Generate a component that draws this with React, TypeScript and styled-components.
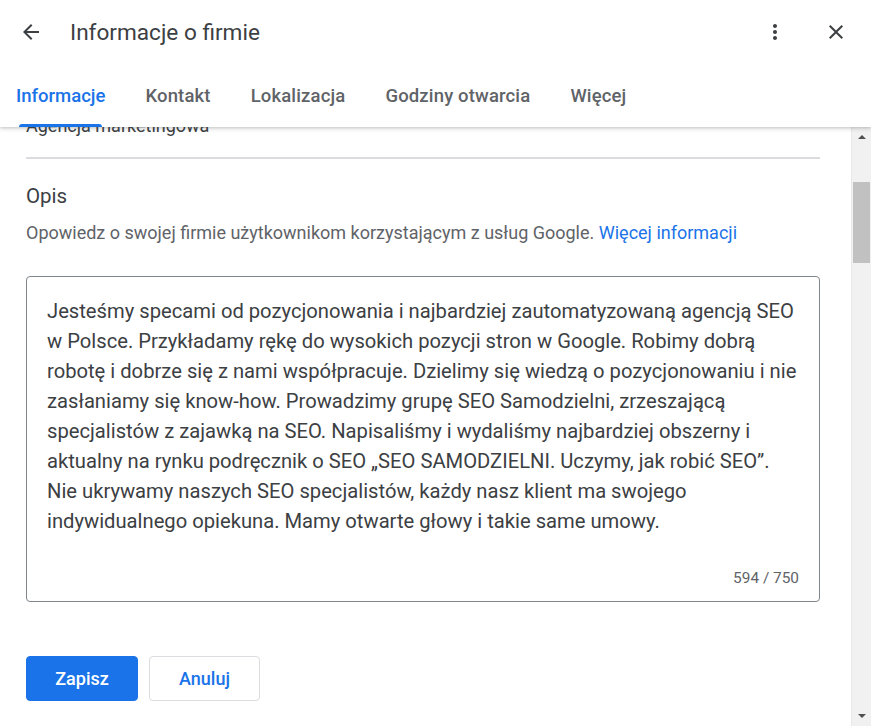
import React from 'react';
import styled, { createGlobalStyle } from 'styled-components';

const BLUE = '#1a73e8';
const TEXT = '#3c4043';
const MUTED = '#5f6368';

const tabs = ['Informacje', 'Kontakt', 'Lokalizacja', 'Godziny otwarcia', 'Więcej'];

const description =
  'Jesteśmy specami od pozycjonowania i najbardziej zautomatyzowaną agencją SEO w Polsce. Przykładamy rękę do wysokich pozycji stron w Google. Robimy dobrą robotę i dobrze się z nami współpracuje. Dzielimy się wiedzą o pozycjonowaniu i nie zasłaniamy się know-how. Prowadzimy grupę SEO Samodzielni, zrzeszającą specjalistów z zajawką na SEO. Napisaliśmy i wydaliśmy najbardziej obszerny i aktualny na rynku podręcznik o SEO „SEO SAMODZIELNI. Uczymy, jak robić SEO”. Nie ukrywamy naszych SEO specjalistów, każdy nasz klient ma swojego indywidualnego opiekuna. Mamy otwarte głowy i takie same umowy.';

export default function App() {
  return (
    <>
      <GlobalStyle />
      <Frame>
        <Header>
          <TopBar>
            <IconButton aria-label="Wstecz">
              <svg viewBox="0 0 24 24">
                <path d="M20 11H7.83l5.59-5.59L12 4l-8 8 8 8 1.41-1.41L7.83 13H20v-2z" />
              </svg>
            </IconButton>
            <Title>Informacje o firmie</Title>
            <Spacer />
            <IconButton aria-label="Więcej opcji">
              <svg viewBox="0 0 24 24">
                <path d="M12 8c1.1 0 2-.9 2-2s-.9-2-2-2-2 .9-2 2 .9 2 2 2zm0 2c-1.1 0-2 .9-2 2s.9 2 2 2 2-.9 2-2-.9-2-2-2zm0 6c-1.1 0-2 .9-2 2s.9 2 2 2 2-.9 2-2-.9-2-2-2z" />
              </svg>
            </IconButton>
            <IconButton aria-label="Zamknij">
              <svg viewBox="0 0 24 24">
                <path d="M19 6.41L17.59 5 12 10.59 6.41 5 5 6.41 10.59 12 5 17.59 6.41 19 12 13.41 17.59 19 19 17.59 13.41 12z" />
              </svg>
            </IconButton>
          </TopBar>
          <Tabs>
            {tabs.map((t, i) => (
              <Tab key={t} $active={i === 0}>
                {t}
              </Tab>
            ))}
          </Tabs>
        </Header>

        <Body>
          <Content>
            <FieldValue>Agencja marketingowa</FieldValue>
            <Divider />
            <SectionTitle>Opis</SectionTitle>
            <Hint>
              Opowiedz o swojej firmie użytkownikom korzystającym z usług Google.{' '}
              <Link href="#">Więcej informacji</Link>
            </Hint>
            <TextBox>
              <BoxText>{description}</BoxText>
              <Counter>594 / 750</Counter>
            </TextBox>
            <Actions>
              <Button $primary>Zapisz</Button>
              <Button>Anuluj</Button>
            </Actions>
          </Content>
          <ScrollBar>
            <Arrow $up />
            <ThumbTrack>
              <Thumb />
            </ThumbTrack>
            <Arrow />
          </ScrollBar>
        </Body>
      </Frame>
    </>
  );
}

const GlobalStyle = createGlobalStyle`
  html, body {
    margin: 0;
    padding: 0;
    background: #fff;
  }
  body {
    font-family: Roboto, "Noto Sans", Arial, sans-serif;
    color: ${TEXT};
  }
  * {
    box-sizing: border-box;
  }
`;

const Frame = styled.div`
  display: flex;
  flex-direction: column;
  width: 871px;
  height: 726px;
  overflow: hidden;
  background: #fff;
`;

const Header = styled.header`
  position: relative;
  z-index: 2;
  height: 127px;
  background: #fff;
  box-shadow: 0 2px 4px rgba(60, 64, 67, 0.18), 0 1px 2px rgba(60, 64, 67, 0.12);
`;

const TopBar = styled.div`
  display: flex;
  align-items: center;
  height: 64px;
  padding: 0 11px 0 7px;
  gap: 13px;
`;

const IconButton = styled.button`
  display: flex;
  align-items: center;
  justify-content: center;
  width: 48px;
  height: 48px;
  padding: 0;
  border: none;
  background: transparent;
  svg {
    width: 24px;
    height: 24px;
    fill: #3c4043;
  }
`;

const Title = styled.h1`
  margin: 0 0 0 2px;
  font-size: 22.6px;
  font-weight: 400;
  color: ${TEXT};
`;

const Spacer = styled.div`
  flex: 1;
`;

const Tabs = styled.nav`
  display: flex;
  height: 63px;
`;

const Tab = styled.div<{ $active?: boolean }>`
  position: relative;
  display: flex;
  align-items: center;
  height: 100%;
  padding: 0 20px 0 ${(p) => (p.$active ? '16px' : '20px')};
  font-size: 18.5px;
  font-weight: 500;
  letter-spacing: ${(p) => (p.$active ? '0' : '0.15px')};
  color: ${(p) => (p.$active ? BLUE : MUTED)};
  &::after {
    content: '';
    display: ${(p) => (p.$active ? 'block' : 'none')};
    position: absolute;
    left: 19px;
    right: 23px;
    bottom: 0;
    height: 3px;
    border-radius: 3px 3px 0 0;
    background: ${BLUE};
  }
`;

const Body = styled.div`
  display: flex;
  flex: 1;
  min-height: 0;
`;

const Content = styled.main`
  flex: 1;
  min-width: 0;
  overflow: hidden;
  padding: 0 31px 0 26px;
`;

const FieldValue = styled.div`
  margin-top: -11px;
  font-size: 18px;
  line-height: 20px;
  color: ${TEXT};
`;

const Divider = styled.hr`
  margin: 21px 0 0;
  border: none;
  height: 2px;
  background: #dadce0;
`;

const SectionTitle = styled.h2`
  margin: 24px 0 0;
  font-size: 20.5px;
  line-height: 26px;
  font-weight: 400;
  color: ${TEXT};
`;

const Hint = styled.p`
  margin: 12px 0 0;
  font-size: 18px;
  line-height: 24px;
  color: ${MUTED};
`;

const Link = styled.a`
  color: ${BLUE};
  text-decoration: none;
`;

const TextBox = styled.div`
  margin-top: 31px;
  height: 326px;
  padding: 19px 20px 0;
  border: 1px solid #80868b;
  border-radius: 4px;
  display: flex;
  flex-direction: column;
`;

const BoxText = styled.p`
  margin: 0;
  flex: 1;
  font-size: 20.2px;
  line-height: 30px;
  color: ${TEXT};
`;

const Counter = styled.div`
  align-self: flex-end;
  margin-bottom: 13px;
  font-size: 15.4px;
  line-height: 20px;
  color: ${MUTED};
`;

const Actions = styled.div`
  display: flex;
  gap: 11px;
  margin-top: 54px;
`;

const Button = styled.button<{ $primary?: boolean }>`
  width: ${(p) => (p.$primary ? '112px' : '111px')};
  height: 45px;
  border-radius: 4px;
  font-family: inherit;
  font-size: 18px;
  font-weight: 500;
  cursor: pointer;
  border: 1px solid ${(p) => (p.$primary ? BLUE : '#dadce0')};
  background: ${(p) => (p.$primary ? BLUE : '#fff')};
  color: ${(p) => (p.$primary ? '#fff' : BLUE)};
`;

const ScrollBar = styled.div`
  display: flex;
  flex-direction: column;
  width: 20px;
  background: #f1f1f1;
  border-left: 1px solid #e8e8e8;
`;

const Arrow = styled.div<{ $up?: boolean }>`
  height: 20px;
  display: flex;
  align-items: center;
  justify-content: center;
  &::before {
    content: '';
    border-left: 4px solid transparent;
    border-right: 4px solid transparent;
    ${(p) =>
      p.$up ? 'border-bottom: 4px solid #505050;' : 'border-top: 4px solid #505050;'}
  }
`;

const ThumbTrack = styled.div`
  flex: 1;
  padding-top: 35px;
`;

const Thumb = styled.div`
  width: 17px;
  height: 81px;
  margin-left: 1px;
  background: #c1c1c1;
`;
